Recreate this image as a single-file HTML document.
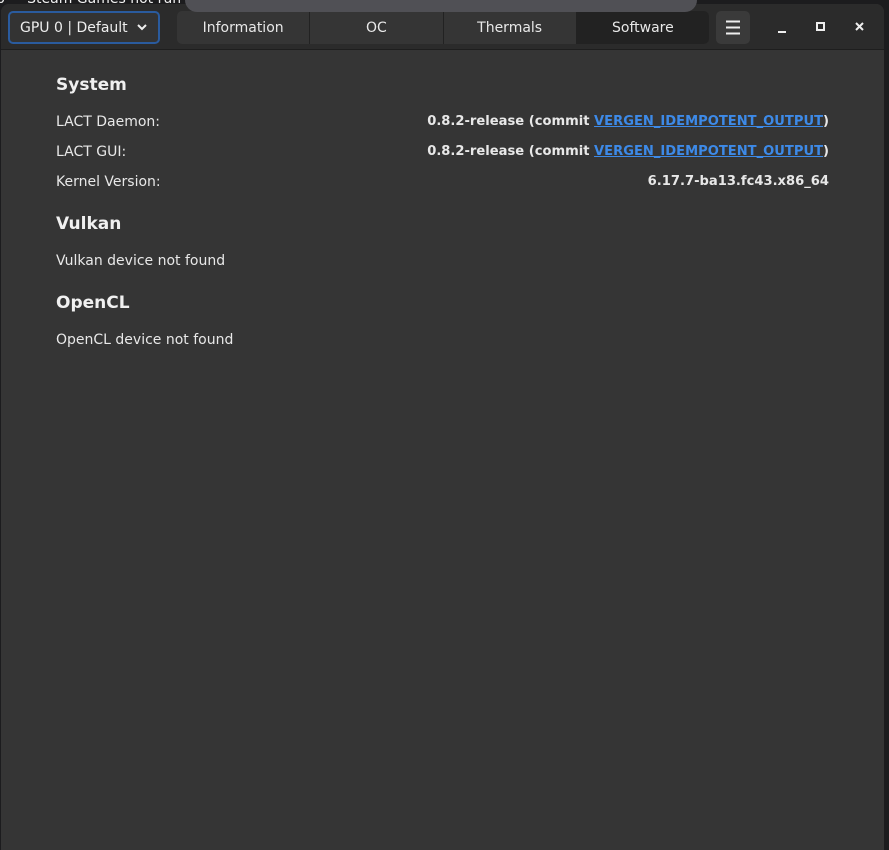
<!DOCTYPE html>
<html><head><style>
*{margin:0;padding:0;box-sizing:border-box}
body{width:889px;height:850px;background:#1c1c1e;font-family:"DejaVu Sans","Liberation Sans",sans-serif;color:#e8e8e8;position:relative;overflow:hidden}
.bgtext{position:absolute;left:-4px;top:-9px;font-size:14px;color:#f0f0f0;white-space:nowrap}
.win{position:absolute;left:1px;top:4px;width:883px;height:846px;background:#353535;border-radius:8px 8px 0 0;overflow:hidden}
.hdr{position:absolute;left:0;top:0;width:100%;height:46px;background:#2b2b2b;border-bottom:1px solid #1e1e1e}
.gpu{position:absolute;left:7px;top:7px;width:152px;height:33px;border:2px solid #2a5b9e;border-radius:5px;background:#333;font-size:14px;line-height:30px;padding-left:10px;color:#eee}
.tabs{position:absolute;left:176px;top:7px;width:532px;height:33px;border-radius:5px;background:#353535;display:flex;overflow:hidden}
.tabs div{flex:1;text-align:center;font-size:14px;line-height:34px;border-right:1px solid #222;color:#e8e8e8}
.tabs div:last-child{border:none;background:#222}
.menu{position:absolute;left:715px;top:7px;width:34px;height:33px;border-radius:5px;background:#3a3a3a}
.popup{position:absolute;left:185px;top:-10px;width:512px;height:22px;background:#505055;border-radius:0 0 12px 12px}
.c{position:absolute;left:55px;font-size:14px}
h2{position:absolute;left:55px;font-size:17px;font-weight:bold;color:#f0f0f0}
.r{position:absolute;right:55px;font-size:13.1px;font-weight:bold;text-align:right;white-space:nowrap}
.r a{color:#3d8ae8;text-decoration:underline}
</style></head><body>
<div class="bgtext">p &nbsp;· &nbsp;Steam Games not run</div>
<div class="win">
<div class="hdr">
<div class="gpu">GPU 0 | Default <svg width="12" height="10" style="margin-left:4px" viewBox="0 0 12 10"><path d="M2 3l4 4 4-4" stroke="#eee" stroke-width="2" fill="none"/></svg></div>
<div class="tabs"><div>Information</div><div>OC</div><div>Thermals</div><div>Software</div></div>
<div class="menu"><svg width="34" height="33"><path d="M10 10.5h14M10 16.5h14M10 22.5h14" stroke="#eee" stroke-width="2"/></svg></div>
<svg style="position:absolute;left:770px;top:12px" width="100" height="24"><path d="M7 16h8" stroke="#eee" stroke-width="2"/><rect x="46" y="7" width="7" height="7" stroke="#eee" stroke-width="2" fill="none"/><path d="M85 7l7 7M92 7l-7 7" stroke="#eee" stroke-width="2"/></svg>
</div>
<h2 style="top:71px">System</h2>
<div class="c" style="top:110px">LACT Daemon:</div>
<div class="r" style="top:110px">0.8.2-release (commit <a>VERGEN_IDEMPOTENT_OUTPUT</a>)</div>
<div class="c" style="top:140px">LACT GUI:</div>
<div class="r" style="top:140px">0.8.2-release (commit <a>VERGEN_IDEMPOTENT_OUTPUT</a>)</div>
<div class="c" style="top:170px">Kernel Version:</div>
<div class="r" style="top:170px">6.17.7-ba13.fc43.x86_64</div>
<h2 style="top:210px">Vulkan</h2>
<div class="c" style="top:249px">Vulkan device not found</div>
<h2 style="top:289px">OpenCL</h2>
<div class="c" style="top:328px">OpenCL device not found</div>
</div>
<div class="popup"></div>
</body></html>
